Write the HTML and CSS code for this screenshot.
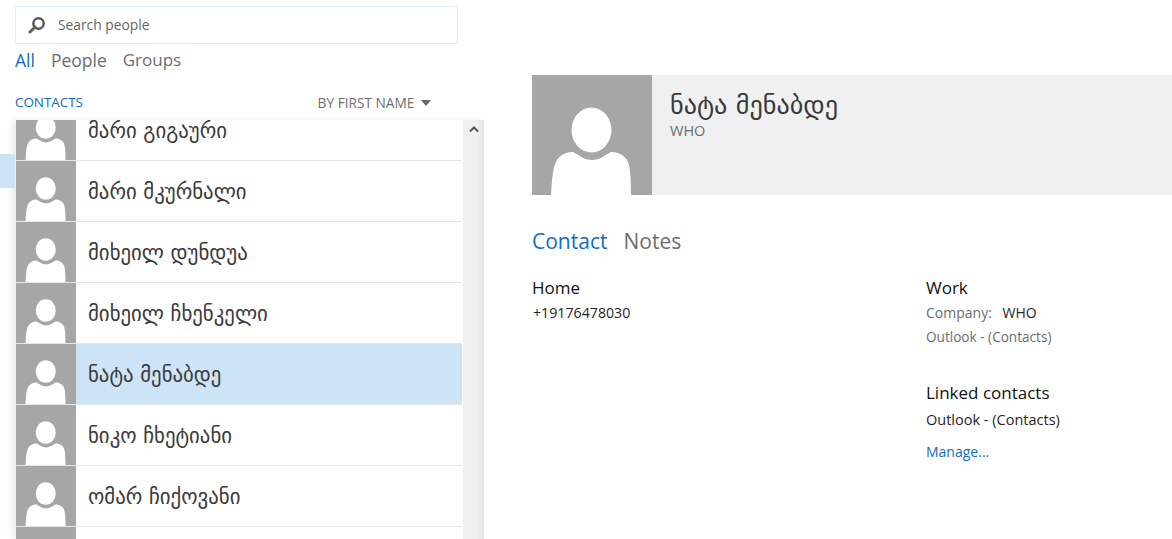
FILE: index.html
```html
<!DOCTYPE html>
<html lang="en">
<head>
    <meta charset="UTF-8">
    <meta name="viewport" content="width=device-width, initial-scale=1.0">
    <title>People</title>
    <link rel="stylesheet" href="styles.css">
</head>
<body>
    <svg class="defs" width="0" height="0" aria-hidden="true">
        <symbol id="person" viewBox="0 0 120 120">
            <ellipse cx="59.5" cy="55" rx="20" ry="22.5" fill="#fff"/>
            <path d="M19 120 C20 104 21 92 24 87 C27 80 34 77 41 77 C47 80 52 85 60 85 C68 85 73 80 79 77 C86 77 93 80 96 87 C98 92 99 104 99 120 Z" fill="#fff"/>
        </symbol>
    </svg>

    <div class="left-pane">
        <div class="selected-stub"></div>
        <div class="search">
            <svg class="search-icon" viewBox="0 0 18 18">
                <circle cx="10.5" cy="7.5" r="5.2" fill="none" stroke="#555" stroke-width="2.4"/>
                <path d="M7 11 L2 16" stroke="#6b5f50" stroke-width="3" stroke-linecap="round"/>
            </svg>
            <span>Search people</span>
        </div>
        <div class="filters">
            <span class="active">All</span>
            <span>People</span>
            <span class="groups">Groups</span>
        </div>
        <div class="list-head">
            <span class="contacts-label">CONTACTS</span>
            <span class="sort">BY FIRST NAME <i class="caret"></i></span>
        </div>
        <div class="list-wrap">
            <ul class="list">
                <li><svg class="avatar"><use href="#person"/></svg><span>მარი გიგაური</span></li>
                <li><svg class="avatar"><use href="#person"/></svg><span>მარი მკურნალი</span></li>
                <li><svg class="avatar"><use href="#person"/></svg><span>მიხეილ დუნდუა</span></li>
                <li><svg class="avatar"><use href="#person"/></svg><span>მიხეილ ჩხენკელი</span></li>
                <li class="selected"><svg class="avatar"><use href="#person"/></svg><span>ნატა მენაბდე</span></li>
                <li><svg class="avatar"><use href="#person"/></svg><span>ნიკო ჩხეტიანი</span></li>
                <li><svg class="avatar"><use href="#person"/></svg><span>ომარ ჩიქოვანი</span></li>
                <li><svg class="avatar"><use href="#person"/></svg><span></span></li>
            </ul>
            <div class="scrollbar">
                <svg class="arrow" viewBox="0 0 10 6"><path d="M1 5.5 L5 1.5 L9 5.5" fill="none" stroke="#555" stroke-width="2"/></svg>
            </div>
        </div>
    </div>

    <div class="detail">
        <div class="card">
            <svg class="card-photo"><use href="#person"/></svg>
            <div class="card-text">
                <div class="card-name">ნატა მენაბდე</div>
                <div class="card-org">WHO</div>
            </div>
        </div>
        <div class="tabs">
            <span class="active">Contact</span>
            <span>Notes</span>
        </div>
        <div class="columns">
            <div class="col-home">
                <h3>Home</h3>
                <p class="dark phone">+19176478030</p>
            </div>
            <div class="col-work">
                <h3>Work</h3>
                <p class="gray company-row">Company: <span class="dark company">WHO</span></p>
                <p class="gray source">Outlook - (Contacts)</p>
                <h3 class="linked-title">Linked contacts</h3>
                <p class="dark linked">Outlook - (Contacts)</p>
                <p class="manage">Manage...</p>
            </div>
        </div>
    </div>
</body>
</html>
```

FILE: styles.css
```css
html, body {
    height: 100%;
}

body {
    margin: 0;
    display: flex;
    height: 539px;
    overflow: hidden;
    background: #fff;
    font-family: "Open Sans", "DejaVu Sans", sans-serif;
    color: #262626;
}

.defs {
    position: absolute;
}

.left-pane {
    position: relative;
    width: 484px;
    flex: none;
    padding: 6px 0 0 15px;
    box-sizing: border-box;
}

.selected-stub {
    position: absolute;
    left: 0;
    top: 154px;
    width: 15px;
    height: 34px;
    background: #cde4f7;
}

.search {
    width: 443px;
    height: 38px;
    box-sizing: border-box;
    border: 1px solid #e3eff8;
    display: flex;
    align-items: center;
    padding: 0 0 2px 12px;
    font-size: 13.8px;
    color: #666;
}

.search-icon {
    width: 18px;
    height: 18px;
    margin: 2px 12px 0 0;
}

.filters {
    display: flex;
    gap: 16px;
    margin-top: 4px;
    font-size: 17.5px;
    line-height: 24px;
    color: #6d6d6d;
}

.filters .groups {
    font-size: 17px;
}

.filters .active, .tabs .active {
    color: #106ebe;
}

.list-head {
    display: flex;
    justify-content: space-between;
    width: 416px;
    margin-top: 18px;
    height: 30px;
    line-height: 24px;
    font-size: 13.4px;
}

.contacts-label {
    color: #106ebe;
}

.sort {
    color: #6d6d6d;
    padding-top: 1px;
    font-size: 13.7px;
}

.caret {
    display: inline-block;
    width: 0;
    height: 0;
    margin-left: 3px;
    vertical-align: 2px;
    border-left: 5.5px solid transparent;
    border-right: 5.5px solid transparent;
    border-top: 6px solid #666;
}

.list-wrap {
    display: flex;
    height: 419px;
    overflow: hidden;
    margin-left: 1px;
    box-shadow: -4px 0 6px rgba(0, 0, 0, 0.08);
}

.list {
    list-style: none;
    margin: -20px 0 0;
    padding: 0;
    width: 447px;
    flex: none;
}

.list li {
    display: flex;
    align-items: center;
    height: 60px;
    margin-right: 1px;
    border-bottom: 1px solid #e6e6e6;
    font-family: "DejaVu Sans", sans-serif;
    font-size: 20.8px;
    color: #3a3a3a;
}

.list li span {
    margin-top: 2px;
}

.list li.selected {
    background: #cde4f7;
}

.avatar {
    width: 60px;
    height: 60px;
    flex: none;
    margin-right: 12px;
    background: #a6a6a6;
}

.scrollbar {
    width: 21px;
    flex: none;
    display: flex;
    justify-content: center;
    align-items: flex-start;
    background: linear-gradient(to right, #f0f0f0, #f0f0f0 70%, #e6e6e6);
}

.arrow {
    width: 10px;
    height: 6px;
    margin-top: 6px;
}

.detail {
    flex: 1;
    padding: 75px 0 0 48px;
    min-width: 0;
}

.card {
    display: flex;
    height: 120px;
    background: #f0f0f0;
}

.card-photo {
    width: 120px;
    height: 120px;
    flex: none;
    background: #a6a6a6;
}

.card-text {
    padding: 15px 0 0 18px;
}

.card-name {
    font-family: "DejaVu Sans", sans-serif;
    font-size: 26.2px;
    line-height: 31px;
    color: #3a3a3a;
}

.card-org {
    font-size: 14.5px;
    line-height: 20px;
    color: #6d6d6d;
}

.tabs {
    display: flex;
    gap: 16px;
    margin-top: 31px;
    font-size: 21px;
    line-height: 30px;
    color: #6d6d6d;
}

.columns {
    display: flex;
    margin-top: 20px;
}

.col-home {
    width: 394px;
    flex: none;
}

h3 {
    margin: 0;
    font-weight: 400;
    font-size: 17px;
    line-height: 24px;
    color: #111;
}

p {
    margin: 0;
    font-size: 14px;
    line-height: 24px;
}

.dark {
    color: #262626;
}

.gray {
    color: #6d6d6d;
}

.phone {
    padding-left: 1px;
    font-size: 14.2px;
    margin-top: 1px;
}

.company-row {
    margin-top: 1px;
}

.company {
    margin-left: 7px;
}

.source {
    font-size: 13.6px;
}

.linked-title {
    margin-top: 32px;
}

.linked {
    font-size: 14.5px;
    margin-top: 3px;
}

.manage {
    margin-top: 8px;
    color: #106ebe;
}
```
